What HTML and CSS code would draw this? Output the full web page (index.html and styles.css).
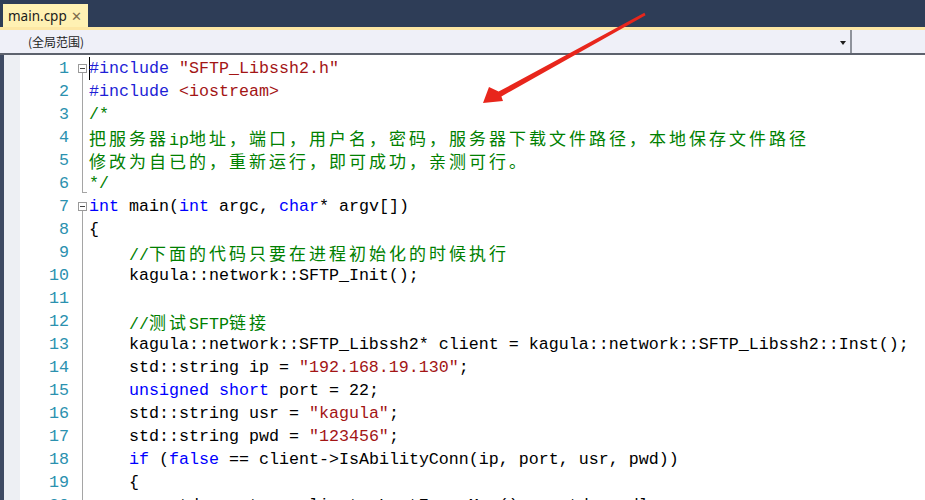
FILE: index.html
```html
<!DOCTYPE html>
<html lang="zh-CN">
<head>
  <meta charset="UTF-8">
  <title>main.cpp</title>
  <link rel="stylesheet" href="styles.css">
</head>
<body>

  <div class="janela">
    <!-- abas -->
    <div class="barra-abas">
      <div class="aba">
        <span class="aba-nome">main.cpp</span>
        <span class="aba-fechar">✕</span>
      </div>
    </div>
    <div class="linha-aba"></div>

    <!-- barra de navegacao -->
    <div class="barra-nav">
      <div class="combo">
        <span class="combo-texto">(全局范围)</span>
        <span class="combo-seta"></span>
      </div>
      <div class="combo-direita"></div>
    </div>

    <!-- editor -->
    <div class="editor">
      <div class="faixa"></div>
      <div class="margem"></div>
      <div class="linhas">
        <div class="ln"><span class="num">1</span><span class="fold abre"></span><span class="src cursor"><span class="pp">#include</span> <span class="str">"SFTP_Libssh2.h"</span></span></div>
        <div class="ln"><span class="num">2</span><span class="fold meio"></span><span class="src"><span class="pp">#include</span> <span class="str">&lt;iostream&gt;</span></span></div>
        <div class="ln"><span class="num">3</span><span class="fold meio"></span><span class="src"><span class="cm">/*</span></span></div>
        <div class="ln"><span class="num">4</span><span class="fold meio"></span><span class="src cm"><span class="zh">把服务器</span>ip<span class="zh">地址，端口，用户名，密码，服务器下载文件路径，本地保存文件路径</span></span></div>
        <div class="ln"><span class="num">5</span><span class="fold meio"></span><span class="src cm"><span class="zh">修改为自已的，重新运行，即可成功，亲测可行。</span></span></div>
        <div class="ln"><span class="num">6</span><span class="fold fim"></span><span class="src"><span class="cm">*/</span></span></div>
        <div class="ln"><span class="num">7</span><span class="fold abre"></span><span class="src"><span class="kw">int</span> main(<span class="kw">int</span> argc, <span class="kw">char</span>* argv[])</span></div>
        <div class="ln"><span class="num">8</span><span class="fold meio"></span><span class="src">{</span></div>
        <div class="ln"><span class="num">9</span><span class="fold meio"></span><span class="src">    <span class="cm">//<span class="zh">下面的代码只要在进程初始化的时候执行</span></span></span></div>
        <div class="ln"><span class="num">10</span><span class="fold meio"></span><span class="src">    kagula::network::SFTP_Init();</span></div>
        <div class="ln"><span class="num">11</span><span class="fold meio"></span><span class="src"></span></div>
        <div class="ln"><span class="num">12</span><span class="fold meio"></span><span class="src">    <span class="cm">//<span class="zh">测试</span>SFTP<span class="zh">链接</span></span></span></div>
        <div class="ln"><span class="num">13</span><span class="fold meio"></span><span class="src">    kagula::network::SFTP_Libssh2* client = kagula::network::SFTP_Libssh2::Inst();</span></div>
        <div class="ln"><span class="num">14</span><span class="fold meio"></span><span class="src">    std::string ip = <span class="str">"192.168.19.130"</span>;</span></div>
        <div class="ln"><span class="num">15</span><span class="fold meio"></span><span class="src">    <span class="kw">unsigned short</span> port = 22;</span></div>
        <div class="ln"><span class="num">16</span><span class="fold meio"></span><span class="src">    std::string usr = <span class="str">"kagula"</span>;</span></div>
        <div class="ln"><span class="num">17</span><span class="fold meio"></span><span class="src">    std::string pwd = <span class="str">"123456"</span>;</span></div>
        <div class="ln"><span class="num">18</span><span class="fold meio"></span><span class="src">    <span class="kw">if</span> (<span class="kw">false</span> == client-&gt;IsAbilityConn(ip, port, usr, pwd))</span></div>
        <div class="ln"><span class="num">19</span><span class="fold meio"></span><span class="src">    {</span></div>
        <div class="ln"><span class="num">20</span><span class="fold meio"></span><span class="src">        std::cout &lt;&lt; client-&gt;LastErrorMsg() &lt;&lt; std::endl;</span></div>
      </div>
    </div>

    <!-- seta vermelha por cima -->
    <svg class="seta" width="925" height="500" viewBox="0 0 925 500">
      <polygon points="483,103 489,87 498.6,91.6 644.4,12.8 645.6,15.2 501.4,96.4 503,101" fill="#e8261c"/>
    </svg>
  </div>

</body>
</html>
```

FILE: styles.css
```css
body {
  margin: 0;
  background: #ffffff;
}
.janela {
  position: relative;
  width: 925px;
  height: 500px;
  overflow: hidden;
}

/* abas */
.barra-abas {
  height: 27px;
  background: #2e3d57;
  display: flex;
  align-items: flex-end;
  padding-left: 3px;
}
.aba {
  height: 23px;
  width: 85px;
  box-sizing: border-box;
  background: #fff1b3;
  display: flex;
  align-items: center;
  padding-left: 5px;
  font-family: "Noto Sans", "Noto Sans CJK SC", sans-serif;
  font-size: 13.5px;
  color: #1b1b1b;
}
.aba-nome {
  flex: 1;
}
.aba-fechar {
  font-size: 13px;
  color: #7d6b4b;
  margin-right: 6px;
}
.linha-aba {
  height: 3px;
  background: #fde7a4;
}

/* barra de navegacao */
.barra-nav {
  height: 23px;
  background: #eff0f8;
  border-bottom: 2px solid #5d626d;
  display: flex;
}
.combo {
  width: 852px;
  box-sizing: border-box;
  display: flex;
  align-items: center;
  padding-left: 28px;
  padding-right: 4px;
  border-right: 2px solid #8f939c;
}
.combo-texto {
  flex: 1;
  font-family: "Noto Sans CJK SC", sans-serif;
  font-size: 12px;
  color: #1e1e1e;
}
.combo-seta {
  width: 0;
  height: 0;
  border-left: 3px solid transparent;
  border-right: 3px solid transparent;
  border-top: 4px solid #1e1e1e;
  margin-top: 2px;
}
.combo-direita {
  flex: 1;
}

/* editor */
.editor {
  display: flex;
  height: 445px;
  font-family: "Liberation Mono", monospace;
  font-size: 16.67px;
}
.faixa {
  width: 4px;
  background: #3e4a62;
}
.margem {
  width: 16px;
  background: #edeff3;
}
.linhas {
  flex: 1;
  padding-top: 2px;
}
.ln {
  display: flex;
  height: 23px;
  line-height: 23px;
}
.num {
  width: 49px;
  text-align: right;
  color: #2b91af;
  padding-right: 1px;
}
.fold {
  position: relative;
  width: 19px;
}
.fold.meio {
  background: linear-gradient(#a5a5a5, #a5a5a5) no-repeat 12px 0 / 1px 100%;
}
.fold.abre {
  background: linear-gradient(#a5a5a5, #a5a5a5) no-repeat 12px 100% / 1px 50%;
}
.fold.abre::after {
  content: "";
  position: absolute;
  left: 8px;
  top: 7px;
  width: 7px;
  height: 7px;
  border: 1px solid #9a9a9a;
  background: #ffffff linear-gradient(#444, #444) no-repeat center / 5px 1px;
}
.fold.fim {
  background:
    linear-gradient(#a5a5a5, #a5a5a5) no-repeat 12px 0 / 1px 21px,
    linear-gradient(#a5a5a5, #a5a5a5) no-repeat 12px 20px / 5px 1px;
}
.src {
  white-space: pre;
  color: #000000;
}
.cursor {
  box-shadow: inset 1px 0 0 #000000;
}
.pp {
  color: #1f1fd6;
}
.kw {
  color: #0000ff;
}
.str {
  color: #a31515;
}
.cm {
  color: #008000;
}
.zh {
  font-family: "Noto Sans CJK SC", sans-serif;
  font-size: 17px;
  letter-spacing: 3px;
}

/* seta */
.seta {
  position: absolute;
  left: 0;
  top: 0;
  pointer-events: none;
}
```
